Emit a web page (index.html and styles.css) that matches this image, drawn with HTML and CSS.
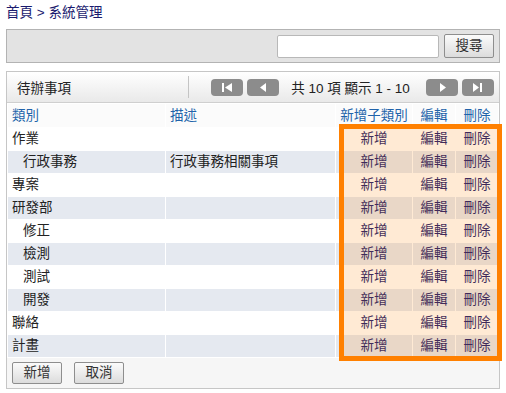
FILE: index.html
```html
<!DOCTYPE html>
<html lang="zh-Hant">
<head>
    <meta charset="UTF-8">
    <title>系統管理</title>
    <link rel="stylesheet" href="styles.css">
</head>
<body>
    <div class="crumb">
        <a href="#">首頁</a> &gt; <a href="#">系統管理</a>
    </div>

    <div class="searchbar">
        <input type="text" class="searchinput">
        <button class="btn btn-search">搜尋</button>
    </div>

    <div class="panel">
        <div class="panelhead">
            <div class="paneltitle">待辦事項</div>
            <div class="pager">
                <span class="pagersep"></span>
                <span class="pbtn"><svg viewBox="0 0 32 17" width="32" height="17"><rect x="11" y="4" width="2" height="9" fill="#fff"/><polygon points="21,4 21,13 14,8.5" fill="#fff"/></svg></span>
                <span class="pbtn"><svg viewBox="0 0 32 17" width="32" height="17"><polygon points="19,4 19,13 13,8.5" fill="#fff"/></svg></span>
                <span class="pagerinfo">共 10 項 顯示 1 - 10</span>
                <span class="pbtn"><svg viewBox="0 0 32 17" width="32" height="17"><polygon points="14,4 14,13 20,8.5" fill="#fff"/></svg></span>
                <span class="pbtn"><svg viewBox="0 0 32 17" width="32" height="17"><polygon points="11,4 11,13 17,8.5" fill="#fff"/><rect x="18" y="4" width="2" height="9" fill="#fff"/></svg></span>
            </div>
        </div>

        <table class="grid">
            <colgroup>
                <col style="width:157px">
                <col style="width:169px">
                <col style="width:76px">
                <col style="width:42px">
                <col style="width:42px">
            </colgroup>
            <thead>
                <tr>
                    <th class="left"><a href="#">類別</a></th>
                    <th class="left"><a href="#">描述</a></th>
                    <th><a href="#">新增子類別</a></th>
                    <th><a href="#">編輯</a></th>
                    <th><a href="#">刪除</a></th>
                </tr>
            </thead>
            <tbody>
                <tr>
                    <td>作業</td><td></td>
                    <td class="act"><a href="#">新增</a></td><td class="act"><a href="#">編輯</a></td><td class="act"><a href="#">刪除</a></td>
                </tr>
                <tr class="alt">
                    <td class="sub">行政事務</td><td>行政事務相關事項</td>
                    <td class="act"><a href="#">新增</a></td><td class="act"><a href="#">編輯</a></td><td class="act"><a href="#">刪除</a></td>
                </tr>
                <tr>
                    <td>專案</td><td></td>
                    <td class="act"><a href="#">新增</a></td><td class="act"><a href="#">編輯</a></td><td class="act"><a href="#">刪除</a></td>
                </tr>
                <tr class="alt">
                    <td>研發部</td><td></td>
                    <td class="act"><a href="#">新增</a></td><td class="act"><a href="#">編輯</a></td><td class="act"><a href="#">刪除</a></td>
                </tr>
                <tr>
                    <td class="sub">修正</td><td></td>
                    <td class="act"><a href="#">新增</a></td><td class="act"><a href="#">編輯</a></td><td class="act"><a href="#">刪除</a></td>
                </tr>
                <tr class="alt">
                    <td class="sub">檢測</td><td></td>
                    <td class="act"><a href="#">新增</a></td><td class="act"><a href="#">編輯</a></td><td class="act"><a href="#">刪除</a></td>
                </tr>
                <tr>
                    <td class="sub">測試</td><td></td>
                    <td class="act"><a href="#">新增</a></td><td class="act"><a href="#">編輯</a></td><td class="act"><a href="#">刪除</a></td>
                </tr>
                <tr class="alt">
                    <td class="sub">開發</td><td></td>
                    <td class="act"><a href="#">新增</a></td><td class="act"><a href="#">編輯</a></td><td class="act"><a href="#">刪除</a></td>
                </tr>
                <tr>
                    <td>聯絡</td><td></td>
                    <td class="act"><a href="#">新增</a></td><td class="act"><a href="#">編輯</a></td><td class="act"><a href="#">刪除</a></td>
                </tr>
                <tr class="alt">
                    <td>計畫</td><td></td>
                    <td class="act"><a href="#">新增</a></td><td class="act"><a href="#">編輯</a></td><td class="act"><a href="#">刪除</a></td>
                </tr>
            </tbody>
        </table>

        <div class="panelfoot">
            <button class="btn">新增</button>
            <button class="btn">取消</button>
        </div>
    </div>

    <div class="highlight"></div>
</body>
</html>
```

FILE: styles.css
```css
body {
    font-family: "Liberation Sans", "Noto Sans CJK TC", sans-serif;
    font-size: 13.5px;
    color: #222;
    margin: 0;
    padding: 0;
    background-color: #fff;
}

a {
    text-decoration: none;
}

.crumb {
    padding: 4px 6px 0;
    height: 21px;
    line-height: 18px;
    color: #1a1a6e;
}

.crumb a {
    color: #1a1a6e;
}

.searchbar {
    margin: 4px 6px 0;
    height: 32px;
    background-color: #e3e3e3;
    border: 1px solid #b3b3b3;
    display: flex;
    justify-content: flex-end;
    align-items: center;
    gap: 5px;
    padding-right: 5px;
}

.searchinput {
    width: 162px;
    height: 23px;
    box-sizing: border-box;
    border: 1px solid #b8b8b8;
    border-radius: 2px;
    background-color: #fff;
    margin: 0;
}

.btn {
    font-family: "Liberation Sans", "Noto Sans CJK TC", sans-serif;
    font-size: 13.5px;
    color: #333;
    width: 50px;
    height: 22px;
    padding: 0;
    line-height: 18px;
    border: 1px solid #8e8e8e;
    border-radius: 2px;
    background: linear-gradient(#fbfbfb, #dcdcdc);
    cursor: pointer;
}

.btn-search {
    height: 24px;
}

.panel {
    margin: 8px 6px 0;
    border: 1px solid #c6c6c6;
    position: relative;
}

.panelhead {
    height: 30px;
    border-bottom: 1px solid #cfcfcf;
    background: linear-gradient(#ffffff, #e9e9e9);
    display: flex;
    align-items: center;
}

.paneltitle {
    flex: 1;
    padding-left: 10px;
    color: #222;
}

.pager {
    display: flex;
    align-items: center;
    padding-right: 5px;
}

.pagersep {
    width: 1px;
    height: 22px;
    background-color: #c4c4c4;
    margin-right: 18px;
}

.pbtn {
    width: 32px;
    height: 17px;
    background-color: #8c8c8c;
    border-radius: 4px;
    display: block;
    margin-left: 4px;
}

.pbtn:nth-of-type(1) {
    margin-left: 0;
}

.pbtn svg {
    display: block;
}

.pagerinfo {
    width: 143px;
    text-align: center;
    color: #222;
}

.grid {
    border-collapse: separate;
    border-spacing: 1px;
    table-layout: fixed;
    width: 100%;
    background-color: #fff;
}

.grid th,
.grid td {
    height: 22px;
    padding: 0 4px;
    line-height: 18px;
    font-weight: normal;
    white-space: nowrap;
    overflow: hidden;
}

.grid th {
    height: 23px;
    background-color: #fbfbfb;
    text-align: center;
}

.grid th.left {
    text-align: left;
}

.grid th a {
    color: #2163aa;
}

.grid tr.alt td {
    background-color: #e5e9f0;
}

.grid td.sub {
    padding-left: 15px;
}

.grid td.act {
    text-align: center;
}

.grid td.act a {
    color: #19196e;
}

.panelfoot {
    height: 30px;
    background-color: #f6f6f6;
    display: flex;
    align-items: center;
    gap: 12px;
    padding-left: 5px;
}

/* orange annotation frame over the action columns */
.highlight {
    position: absolute;
    left: 339px;
    top: 124px;
    width: 163px;
    height: 237px;
    box-sizing: border-box;
    border: 5px solid #ff8000;
    background-color: rgba(255, 128, 0, 0.17);
    pointer-events: none;
}
```
